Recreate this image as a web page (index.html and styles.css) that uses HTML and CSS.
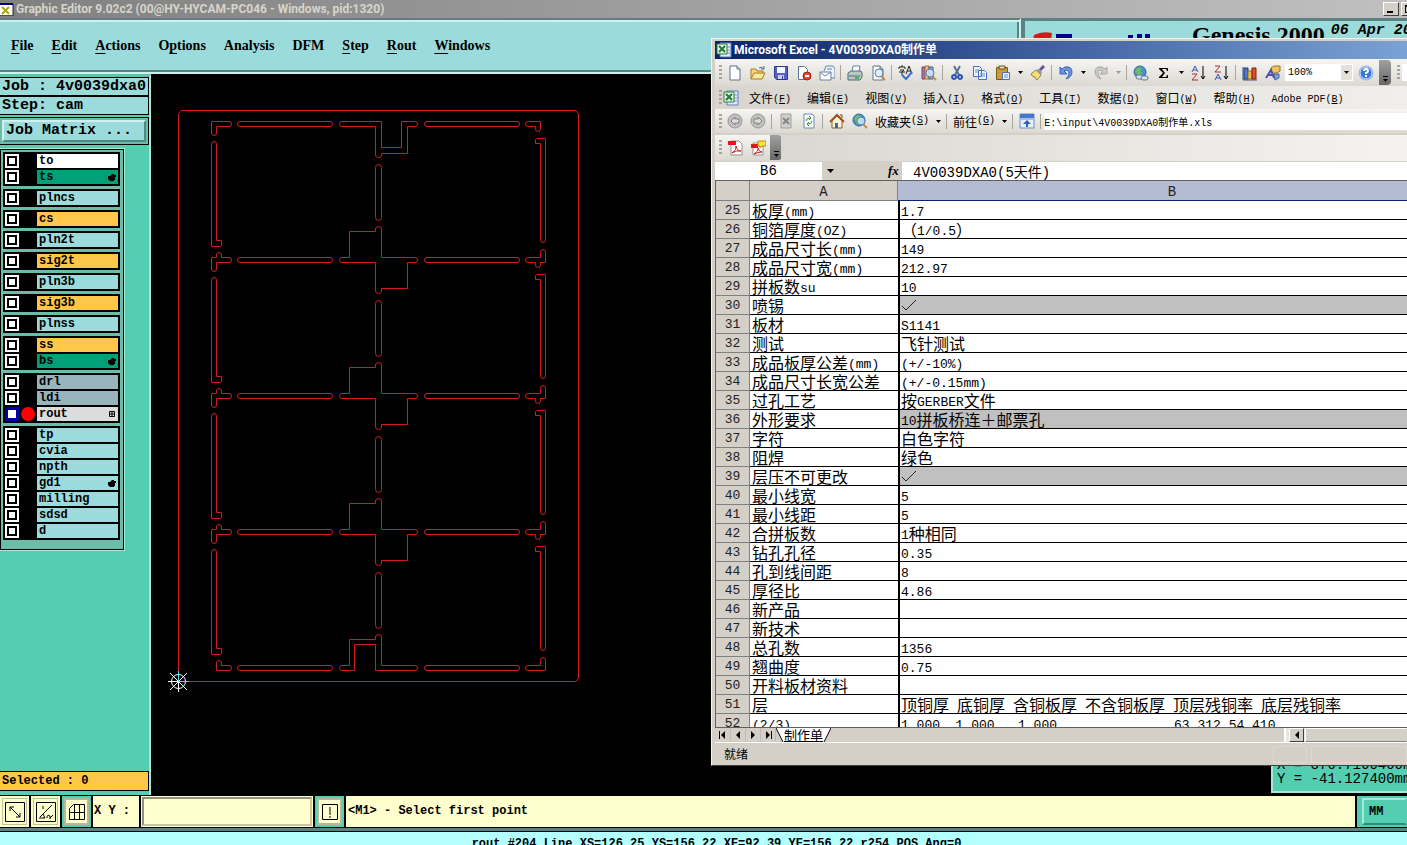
FILE: index.html
```html
<!DOCTYPE html>
<html lang="zh-CN">

<head>
    <meta charset="UTF-8">
    <meta name="viewport" content="width=device-width, initial-scale=1.0">
    <title>Graphic Editor</title>
    <link rel="stylesheet" href="styles.css">
</head>

<body>
    <!-- shared icon shapes -->
    <svg class="defs" width="0" height="0" aria-hidden="true">
        <defs>
            <symbol id="hand" viewBox="0 0 8 8">
                <path d="M0 3h2l2-2h2v1h2v2H7v3H6v1H2L0 6z" />
            </symbol>
            <symbol id="excel" viewBox="0 0 16 16">
                <path d="M4 1h11v14H4z" fill="#dfe9f7" stroke="#5a7ec0" />
                <path d="M10 5h4M10 8h4M10 11h4" stroke="#7d9bd0" />
                <path d="M1 2h10v10H1z" fill="#e8f4e4" stroke="#2c7a36" />
                <path d="M3 4l6 6M9 4l-6 6" stroke="#1f7a30" stroke-width="2" />
            </symbol>
            <symbol id="page" viewBox="0 0 16 16">
                <path d="M3 1h7l3 3v11H3z" fill="#fff" stroke="#5a7292" />
                <path d="M10 1v3h3" fill="#cfdcf0" stroke="#5a7292" />
            </symbol>
            <symbol id="lens" viewBox="0 0 16 16">
                <path d="M11 11l4 4" stroke="#c58a3c" stroke-width="2" />
                <circle cx="9" cy="8" r="4" fill="#d5ecfa" fill-opacity=".8" stroke="#5b7fa5" />
            </symbol>
            <symbol id="globe" viewBox="0 0 16 16">
                <circle cx="7" cy="7" r="6" fill="#4a90d0" stroke="#2b6aa0" />
                <path d="M3 4q3-3 6-1l-2 3 2 2-2 4q-3 0-3-4L2 7z" fill="#6cc060" />
            </symbol>
            <symbol id="arrow" viewBox="0 0 5 3">
                <path d="M0 0h5L2.500 3z" />
            </symbol>
        </defs>
    </svg>

    <!-- Graphic Editor window -->
    <div class="title-bar">
        <svg class="title-icon" viewBox="0 0 14 14">
            <path d="M0 1h13v12H0z" fill="#fff" />
            <path d="M0 1h13v2H0z" fill="#000080" />
            <path d="M2 5l7 7M9 5l-7 7" stroke="#a8a800" stroke-width="2" />
            <path d="M13 2v12H0" fill="none" stroke="#222" />
        </svg>
        <h1>Graphic Editor 9.02c2 (00@HY-HYCAM-PC046 - Windows, pid:1320)</h1>
        <button class="win-btn" aria-label="Minimize"><span class="min"></span></button>
        <button class="win-btn" aria-label="Maximize"><span class="max"></span></button>
    </div>

    <div class="header">
        <nav class="menu">
            <button><u>F</u>ile</button>
            <button><u>E</u>dit</button>
            <button><u>A</u>ctions</button>
            <button>O<u>p</u>tions</button>
            <button>Analysis</button>
            <button>DFM</button>
            <button><u>S</u>tep</button>
            <button><u>R</u>out</button>
            <button><u>W</u>indows</button>
        </nav>
        <div class="brand">
            <svg class="brand-logo" viewBox="0 0 120 24">
                <path d="M2 12q8-4 18-2l-2 14H0z" fill="#d81818" />
                <path d="M24 11h16v13H24zM96 12h5v12h-5zM105 11h5v13h-5zM113 11h5v13h-5z" fill="#000088" />
            </svg>
            <span class="brand-name">Genesis 2000</span>
            <span class="brand-date">06 Apr 20</span>
        </div>
    </div>

    <div class="main">
        <aside class="side">
            <div class="job-info">Job : 4v0039dxa0</div>
            <div class="job-info">Step: cam</div>
            <div class="matrix">
                <button class="matrix-btn">Job Matrix ...</button>
            </div>

            <div class="layers">
                <div class="group">
                    <label class="row"><input type="checkbox"><span class="dot"></span><span class="name white">to</span></label>
                    <label class="row"><input type="checkbox"><span class="dot"></span><span class="name green">ts<svg class="mark"><use href="#hand" /></svg></span></label>
                </div>
                <div class="group">
                    <label class="row"><input type="checkbox"><span class="dot"></span><span class="name">plncs</span></label>
                </div>
                <div class="group">
                    <label class="row"><input type="checkbox"><span class="dot"></span><span class="name orange">cs</span></label>
                </div>
                <div class="group">
                    <label class="row"><input type="checkbox"><span class="dot"></span><span class="name">pln2t</span></label>
                </div>
                <div class="group">
                    <label class="row"><input type="checkbox"><span class="dot"></span><span class="name orange">sig2t</span></label>
                </div>
                <div class="group">
                    <label class="row"><input type="checkbox"><span class="dot"></span><span class="name">pln3b</span></label>
                </div>
                <div class="group">
                    <label class="row"><input type="checkbox"><span class="dot"></span><span class="name orange">sig3b</span></label>
                </div>
                <div class="group">
                    <label class="row"><input type="checkbox"><span class="dot"></span><span class="name">plnss</span></label>
                </div>
                <div class="group">
                    <label class="row"><input type="checkbox"><span class="dot"></span><span class="name orange">ss</span></label>
                    <label class="row"><input type="checkbox"><span class="dot"></span><span class="name green">bs<svg class="mark"><use href="#hand" /></svg></span></label>
                </div>
                <div class="group">
                    <label class="row"><input type="checkbox"><span class="dot"></span><span class="name gray">drl</span></label>
                    <label class="row"><input type="checkbox"><span class="dot"></span><span class="name gray">ldi</span></label>
                    <label class="row"><input type="checkbox" checked><span class="dot red"></span><span class="name light">rout<svg class="mark" viewBox="0 0 8 8"><path d="M1.500 1.500h5v5h-5zM4 1v6M1 4h6" fill="none" stroke="#000" /></svg></span></label>
                </div>
                <div class="group">
                    <label class="row"><input type="checkbox"><span class="dot"></span><span class="name">tp</span></label>
                    <label class="row"><input type="checkbox"><span class="dot"></span><span class="name">cvia</span></label>
                    <label class="row"><input type="checkbox"><span class="dot"></span><span class="name">npth</span></label>
                    <label class="row"><input type="checkbox"><span class="dot"></span><span class="name">gd1<svg class="mark"><use href="#hand" /></svg></span></label>
                    <label class="row"><input type="checkbox"><span class="dot"></span><span class="name">milling</span></label>
                    <label class="row"><input type="checkbox"><span class="dot"></span><span class="name">sdsd</span></label>
                    <label class="row"><input type="checkbox"><span class="dot"></span><span class="name">d</span></label>
                </div>
            </div>

            <div class="selected">Selected : 0</div>
        </aside>

        <div class="canvas">
            <svg class="board" width="460" height="650" viewBox="151 74 460 650">
                <defs>
                    <!-- slots repeated on every board row -->
                    <g id="slots">
                        <rect x="237.500" y="121.500" width="95" height="5" rx="2.500" />
                        <rect x="424.500" y="121.500" width="95" height="5" rx="2.500" />
                    </g>
                    <g id="walls">
                        <rect x="375.500" y="164.500" width="6" height="56" rx="3" />
                        <path d="M211.500 246.500V144q0-2.500 2.500-2.500t2.500 2.500V240.500H221.500V245.500l-1 1z" />
                        <path d="M545.500 138.500V240q0 2.500-2.500 2.500t-2.500-2.500V143.500H535.500V139.500l1-1z" />
                    </g>
                    <g id="joints">
                        <path d="M211.500 257.500H216.500V255q0-2.500 2.500-2.500t2.500 2.500V257.500H229q2.500 0 2.500 2.500t-2.500 2.500H216.500V269q0 2.500-2.500 2.500t-2.500-2.500z" />
                        <path d="M342 257.500H349.500V231.500H375.500V229q0-2.500 3-2.500t3 2.500V257.500H415q2.500 0 2.500 2.500t-2.500 2.500H407.500V288.500H381.500V291q0 2.500-3 2.500t-3-2.500V262.500H342q-2.500 0-2.500-2.500t2.500-2.500z" />
                        <path d="M545.500 262.500V252q0-2.500-2.500-2.500t-2.500 2.500V257.500H528q-2.500 0-2.500 2.500t2.500 2.500H535.500V265q0 2.500 2.500 2.500t2.500-2.500V262.500z" />
                    </g>
                </defs>
                <g class="rout">
                    <path d="M178.500 681.500V113.500l3-3H575.500l3 3V678.500l-3 3z" />
                    <use href="#slots" />
                    <use href="#slots" y="136" />
                    <use href="#slots" y="272" />
                    <use href="#slots" y="408" />
                    <use href="#slots" y="544" />
                    <use href="#walls" />
                    <use href="#walls" y="136" />
                    <use href="#walls" y="272" />
                    <use href="#walls" y="408" />
                    <use href="#joints" />
                    <use href="#joints" y="136" />
                    <use href="#joints" y="272" />
                    <!-- top edge -->
                    <path d="M211.500 121.500H229q2.500 0 2.500 2.500t-2.500 2.500H216.500V133q0 2.500-2.500 2.500t-2.500-2.500z" />
                    <path d="M342 121.500H381.500V147.500H401.500V121.500H415q2.500 0 2.500 2.500t-2.500 2.500H407.500V153.500H381.500V155q0 2.500-3 2.500t-3-2.500V126.500H342q-2.500 0-2.500-2.500t2.500-2.500z" />
                    <path d="M540.500 121.500H528q-2.500 0-2.500 2.500t2.500 2.500H535.500V129q0 2.500 2.500 2.500t2.500-2.500z" />
                    <!-- bottom edge -->
                    <path d="M216.500 670.500V663q0-2.500 2.500-2.500t2.500 2.500V665.500H229q2.500 0 2.500 2.500t-2.500 2.500z" />
                    <path d="M342 665.500H349.500V639.500H375.500V637q0-2.500 3-2.500t3 2.500V665.500H415q2.500 0 2.500 2.500t-2.500 2.500H375.500V644.500H354.500V670.500H342q-2.500 0-2.500-2.500t2.500-2.500z" />
                    <path d="M545.500 670.500V660q0-2.500-2.500-2.500t-2.500 2.500V665.500H528q-2.500 0-2.500 2.500t2.500 2.500z" />
                </g>
                <g class="origin">
                    <circle cx="178.500" cy="681.500" r="7" />
                    <path d="M168 681.500h21M178.500 671v21M170 673l17 17M187 673l-17 17" />
                    <path class="axis" d="M178.500 671v10.500H189" />
                </g>
            </svg>
            <div class="coords">
                <div>X = 370.7160400mm</div>
                <div>Y = -41.127400mm</div>
            </div>
        </div>
    </div>

    <div class="command">
        <button class="cmd-btn" aria-label="Area select">
            <svg viewBox="0 0 20 20"><path d="M.500 .500h19v19H.500zM5 5l10 10M5 9V5h4M15 11v4h-4" /></svg>
        </button>
        <button class="cmd-btn" aria-label="Angle">
            <svg viewBox="0 0 20 20"><path d="M.500 .500h19v19H.500zM4 15L16 3M3 16h6l-2-4M7 4v3M11 16q0-4 3-2v3M17 13l-3 3" /></svg>
        </button>
        <button class="cmd-btn teal" aria-label="Grid">
            <svg viewBox="0 0 20 20"><path d="M2.500 6.500l4-4h11v15h-15zM2.500 10.500h15M7.500 3v14M12.500 3v14" /></svg>
        </button>
        <label class="xy" for="xy">X Y :</label>
        <div class="xy-box"><input type="text" id="xy"></div>
        <button class="cmd-btn teal" aria-label="Alert">
            <svg viewBox="0 0 20 20"><path d="M2.500 2.500h15v15h-15zM10 5v8M10 14v2" /></svg>
        </button>
        <div class="message">&lt;M1&gt; - Select first point</div>
        <div class="units"><button>MM</button></div>
    </div>
    <div class="status-line">rout #204 Line XS=126.25 YS=156.22 XE=92.39 YE=156.22 r254 POS Ang=0</div>

    <!-- Excel window -->
    <section class="excel">
        <div class="excel-title">
            <svg class="icon"><use href="#excel" /></svg>
            <h2>Microsoft Excel - 4V0039DXA0制作单</h2>
        </div>

        <div class="toolbar">
            <span class="grip"></span>
            <button aria-label="新建"><svg class="icon"><use href="#page" /></svg></button>
            <button aria-label="打开"><svg class="icon" viewBox="0 0 16 16"><path d="M1 14V4h5l1 2h6v3" fill="#f8d878" stroke="#a87820" /><path d="M1 14l3-6h11l-3 6z" fill="#ffe9a0" stroke="#a87820" /><path d="M9 3q3-2 5 1M14 1v3h-3" fill="none" stroke="#4070b0" /></svg></button>
            <button aria-label="保存"><svg class="icon" viewBox="0 0 16 16"><path d="M1.500 1.500h13v13h-11l-2-2z" fill="#5560c8" stroke="#303890" /><path d="M4 2h8v6H4z" fill="#f2f4ff" /><path d="M5 10h6v4H5z" fill="#c8cce8" /><path d="M9 11h1v3H9z" fill="#303890" /></svg></button>
            <button aria-label="权限"><svg class="icon" viewBox="0 0 16 16"><path d="M2.500 1.500h6l3 3v10h-9z" fill="#fff" stroke="#5a7292" /><circle cx="11" cy="11" r="4" fill="#e04830" stroke="#a02010" /><path d="M9 11h4" stroke="#fff" stroke-width="2" /></svg></button>
            <button aria-label="电子邮件"><svg class="icon" viewBox="0 0 16 16"><path d="M5 6l2-5h7l2 3v9H6" fill="#eef3fb" stroke="#6a82a8" /><path d="M1 7h11v8H1z" fill="#fff" stroke="#6a82a8" /><path d="M1 7l5 4 6-4M8 4h5" fill="none" stroke="#6a82a8" /></svg></button>
            <span class="sep"></span>
            <button aria-label="打印"><svg class="icon" viewBox="0 0 16 16"><path d="M5 7l1-6h7l-1 6" fill="#fff" stroke="#6a82a8" /><path d="M1 8l3-2h10l1 2v4l-2 3H1z" fill="#b8c8c8" stroke="#506878" /><path d="M2 11h11" stroke="#506878" /><path d="M8 13h4" stroke="#40c040" stroke-width="2" /></svg></button>
            <button aria-label="打印预览"><svg class="icon"><use href="#page" /><use href="#lens" /></svg></button>
            <span class="sep"></span>
            <button aria-label="拼写检查"><svg class="icon" viewBox="0 0 16 16"><path d="M4 0v2M1 4V2h6v2M2 5h4L4 7v3M1 7h6M8 9l3-8 3 8M9 6h4" fill="none" stroke="#222" /><path d="M4 10l4 4 6-7" fill="none" stroke="#3a70d0" stroke-width="2" /></svg></button>
            <button aria-label="信息检索"><svg class="icon" viewBox="0 0 16 16"><path d="M1 2h3v12H1z" fill="#b06cc0" stroke="#704080" /><path d="M4 1h4v13H4z" fill="#f0c070" stroke="#a07030" /><path d="M8 2h4v12H8z" fill="#90a8e0" stroke="#4060a0" /><use href="#lens" /></svg></button>
            <span class="sep"></span>
            <button aria-label="剪切"><svg class="icon" viewBox="0 0 16 16"><path d="M5 1l5 9M11 1l-5 9" stroke="#5a7090" stroke-width="2" /><path d="M5 10a2 2 0 1 0 .1 0zM11 10a2 2 0 1 0 .1 0z" fill="none" stroke="#2850b8" stroke-width="2" /></svg></button>
            <button aria-label="复制"><svg class="icon" viewBox="0 0 16 16"><path d="M1.500 1.500h6l2 2v8h-8zM6.500 5.500h6l2 2v7h-8z" fill="#edf3ff" stroke="#4a70c0" /><path d="M3 5h4M3 7h3M8 9h5M8 11h5" stroke="#6f91d0" /></svg></button>
            <button aria-label="粘贴"><svg class="icon" viewBox="0 0 16 16"><path d="M1.500 2.500h11v12h-11z" fill="#d09a38" stroke="#7a5818" /><path d="M4 1h6v3H4z" fill="#e8e0b0" stroke="#605020" /><path d="M7.500 7.500h7v7h-7z" fill="#edf3ff" stroke="#4a70c0" /><path d="M9 10h4M9 12h4" stroke="#6f91d0" /></svg></button>
            <button class="drop" aria-label="粘贴选项"><svg class="caret"><use href="#arrow" /></svg></button>
            <button aria-label="格式刷"><svg class="icon" viewBox="0 0 16 16"><path d="M1 9l5-4 5 5-4 5q-2-1-2-3-3 0-4-3z" fill="#f4dc80" stroke="#a08030" /><path d="M6 5l3-1 3 3-1 3z" fill="#9098b0" /><path d="M10 5l4-4" stroke="#705090" stroke-width="3" /></svg></button>
            <span class="sep"></span>
            <button aria-label="撤消"><svg class="icon" viewBox="0 0 16 16"><path d="M2 2v7h7L6 6q5-2 5 2 0 3-3 6 6-2 6-7 0-6-7-5L4 4z" fill="#6a94e4" stroke="#3c62b0" /></svg></button>
            <button class="drop" aria-label="撤消列表"><svg class="caret"><use href="#arrow" /></svg></button>
            <button aria-label="恢复" disabled><svg class="icon" viewBox="0 0 16 16"><path d="M14 2v7H7l3-3Q5 4 5 8q0 3 3 6-6-2-6-7 0-6 7-5l3 2z" fill="#cacaca" stroke="#a8a8a8" /></svg></button>
            <button class="drop off" aria-label="恢复列表" disabled><svg class="caret"><use href="#arrow" /></svg></button>
            <span class="sep"></span>
            <button aria-label="超链接"><svg class="icon" viewBox="0 0 16 16"><use href="#globe" /><rect x="3" y="10" width="7" height="4" rx="2" fill="#dde6ee" stroke="#5a7890" /><rect x="8" y="11" width="7" height="4" rx="2" fill="#dde6ee" stroke="#5a7890" /></svg></button>
            <button aria-label="自动求和"><svg class="icon" viewBox="0 0 16 16"><path d="M3 3h9v3h-1l-1-2H6l3 4-3 4h4l1-2h1v3H3v-1l4-4-4-4z" /></svg></button>
            <button class="drop" aria-label="函数列表"><svg class="caret"><use href="#arrow" /></svg></button>
            <button aria-label="升序排序"><svg class="icon" viewBox="0 0 16 16"><path d="M1 7l3-6 3 6M2 5h4" fill="none" stroke="#3858b0" /><path d="M1 9h5l-5 6h6" fill="none" stroke="#a83030" /><path d="M12 1v13M10 11l2 3 2-3" fill="none" stroke="#000" /></svg></button>
            <button aria-label="降序排序"><svg class="icon" viewBox="0 0 16 16"><path d="M1 1h5L1 7h6" fill="none" stroke="#a83030" /><path d="M1 15l3-6 3 6M2 13h4" fill="none" stroke="#3858b0" /><path d="M12 1v13M10 11l2 3 2-3" fill="none" stroke="#000" /></svg></button>
            <span class="sep"></span>
            <button aria-label="图表向导"><svg class="icon" viewBox="0 0 16 16"><path d="M1 2v13h14" fill="none" stroke="#405080" /><path d="M2 3h4v11H2z" fill="#5078d0" stroke="#203870" /><path d="M6 6h4v8H6z" fill="#f0c040" stroke="#907020" /><path d="M10 3h4v11h-4z" fill="#d85030" stroke="#802010" /></svg></button>
            <button aria-label="绘图"><svg class="icon" viewBox="0 0 16 16"><path d="M6 3l3-2h6v5l-3 2H6z" fill="#f0c060" stroke="#a07028" /><path d="M1 13L6 5l3 8M3 10h5" fill="none" stroke="#5050b0" stroke-width="2" /><path d="M9 9h5v4l-4 2z" fill="#80a0d8" stroke="#4060a0" /></svg></button>
            <select class="zoom" aria-label="显示比例">
                <option>100%</option>
            </select>
            <button class="help" aria-label="帮助"><svg class="icon" viewBox="0 0 16 16"><circle cx="8" cy="8" r="7" fill="#3c78d8" stroke="#98b8e8" /><circle cx="8" cy="8" r="6" fill="none" stroke="#d8e6fa" /><path d="M6 6q0-2 2-2t2 2q0 1-2 2v1M8 10v2" fill="none" stroke="#fff" stroke-width="2" /></svg></button>
            <button class="more" aria-label="工具栏选项"><svg viewBox="0 0 7 6"><path d="M1 0h5v1H1zM1 3h5L3.500 6z" /></svg></button>
            <span class="grip second"></span>
            <span class="field-edge"></span>
        </div>

        <div class="excel-menu">
            <span class="grip"></span>
            <svg class="icon"><use href="#excel" /></svg>
            <button>文件<span class="en">(<u>F</u>)</span></button>
            <button>编辑<span class="en">(<u>E</u>)</span></button>
            <button>视图<span class="en">(<u>V</u>)</span></button>
            <button>插入<span class="en">(<u>I</u>)</span></button>
            <button>格式<span class="en">(<u>O</u>)</span></button>
            <button>工具<span class="en">(<u>T</u>)</span></button>
            <button>数据<span class="en">(<u>D</u>)</span></button>
            <button>窗口<span class="en">(<u>W</u>)</span></button>
            <button>帮助<span class="en">(<u>H</u>)</span></button>
            <button><span class="en">Adobe PDF(<u>B</u>)</span></button>
        </div>

        <div class="toolbar web">
            <span class="grip"></span>
            <button aria-label="后退" disabled><svg class="icon" viewBox="0 0 16 16"><circle cx="8" cy="8" r="7" fill="#c0c0c0" stroke="#989898" /><path d="M8 4L4 8l4 4v-2h4V6H8z" fill="#dcdcdc" stroke="#808080" /></svg></button>
            <button aria-label="前进" disabled><svg class="icon" viewBox="0 0 16 16"><circle cx="8" cy="8" r="7" fill="#c0c0c0" stroke="#989898" /><path d="M8 4l4 4-4 4v-2H4V6h4z" fill="#dcdcdc" stroke="#808080" /></svg></button>
            <span class="sep"></span>
            <button aria-label="停止" disabled><svg class="icon" viewBox="0 0 16 16"><path d="M3 1h10v14H3z" fill="#d0d0d0" stroke="#a0a0a0" /><path d="M5 5l6 6M11 5l-6 6" stroke="#888" stroke-width="2" /></svg></button>
            <button aria-label="刷新"><svg class="icon" viewBox="0 0 16 16"><path d="M3 1h8l2 2v12H3z" fill="#fff" stroke="#6888b8" /><path d="M5 8q0-3 4-3M8 3l2 2-2 2M11 8q0 3-4 3M8 9l-2 2 2 2" fill="none" stroke="#389038" /></svg></button>
            <span class="sep"></span>
            <button aria-label="主页"><svg class="icon" viewBox="0 0 16 16"><path d="M3 8v7h10V8L8 3z" fill="#fff4d8" stroke="#806030" /><path d="M1 9l7-7 7 7" fill="none" stroke="#a05020" stroke-width="2" /><path d="M11 2h2v3" fill="none" stroke="#704020" /><path d="M6 10h3v5H6z" fill="#3868a8" /></svg></button>
            <button aria-label="搜索"><svg class="icon"><use href="#globe" /><use href="#lens" /></svg></button>
            <button class="text">收藏夹<span class="en">(<u>S</u>)</span><svg class="caret"><use href="#arrow" /></svg></button>
            <span class="sep"></span>
            <button class="text">前往<span class="en">(<u>G</u>)</span><svg class="caret"><use href="#arrow" /></svg></button>
            <span class="sep"></span>
            <button aria-label="只显示Web工具栏"><svg class="icon" viewBox="0 0 16 16"><path d="M1 1h14v14H1z" fill="#e6effc" stroke="#6890c8" /><path d="M1 1h14v4H1z" fill="#4878c8" /><path d="M2 6h12" stroke="#6890c8" /><path d="M8 7l4 4H9v3H7v-3H4z" fill="#3060b8" /></svg></button>
            <span class="sep"></span>
            <input class="address" type="text" aria-label="地址" value="E:\input\4V0039DXA0制作单.xls">
        </div>

        <div class="pdf-bar">
            <div class="toolbar pdf">
                <span class="grip"></span>
                <button aria-label="转换为 PDF"><svg class="icon" viewBox="0 0 16 16"><path d="M4 1h8l3 3v11H4z" fill="#fff" stroke="#909090" /><path d="M1 1h8v4H1z" fill="#e01818" /><path d="M5 13q5-3 4-7 1 5 5 5-5-1-9 2z" fill="none" stroke="#d02020" /></svg></button>
                <button aria-label="转换并注释"><svg class="icon" viewBox="0 0 16 16"><path d="M3 3h8l2 2v10H3z" fill="#fff" stroke="#909090" /><path d="M1 4h7v4H1z" fill="#e01818" /><path d="M4 14q5-3 4-6 1 4 4 4-4 0-8 2z" fill="none" stroke="#d02020" /><path d="M8 1h8v5h-4l-2 2V6H8z" fill="#ffe040" stroke="#b09010" /></svg></button>
                <button class="more" aria-label="工具栏选项"><svg viewBox="0 0 7 6"><path d="M1 0h5v1H1zM1 3h5L3.500 6z" /></svg></button>
            </div>
        </div>

        <div class="formula">
            <input class="cell-name" type="text" aria-label="名称框" value="B6">
            <button class="name-drop" aria-label="名称列表"><svg viewBox="0 0 7 4"><path d="M0 0h7L3.500 4z" /></svg></button>
            <span class="fx">fx</span>
            <input class="cell-value" type="text" aria-label="编辑栏" value="4V0039DXA0(5天件)">
        </div>

        <div class="sheet">
            <table>
                <thead>
                    <tr>
                        <th class="num"></th>
                        <th class="col-a">A</th>
                        <th class="col-b">B</th>
                    </tr>
                </thead>
                <tbody>
                    <tr><th>25</th><td>板厚<span class="en">(mm)</span></td><td><span class="en">1.7</span></td></tr>
                    <tr><th>26</th><td>铜箔厚度<span class="en">(OZ)</span></td><td>（<span class="en">1/0.5</span>）</td></tr>
                    <tr><th>27</th><td>成品尺寸长<span class="en">(mm)</span></td><td><span class="en">149</span></td></tr>
                    <tr><th>28</th><td>成品尺寸宽<span class="en">(mm)</span></td><td><span class="en">212.97</span></td></tr>
                    <tr><th>29</th><td>拼板数<span class="en">su</span></td><td><span class="en">10</span></td></tr>
                    <tr><th>30</th><td>喷锡</td><td class="filled"><svg class="tick" viewBox="0 0 16 12"><path d="M1 7l4 4L15 1" /></svg></td></tr>
                    <tr><th>31</th><td>板材</td><td><span class="en">S1141</span></td></tr>
                    <tr><th>32</th><td>测试</td><td>飞针测试</td></tr>
                    <tr><th>33</th><td>成品板厚公差<span class="en">(mm)</span></td><td><span class="en">(+/-10%)</span></td></tr>
                    <tr><th>34</th><td>成品尺寸长宽公差</td><td><span class="en">(+/-0.15mm)</span></td></tr>
                    <tr><th>35</th><td>过孔工艺</td><td>按<span class="en">GERBER</span>文件</td></tr>
                    <tr><th>36</th><td>外形要求</td><td class="filled"><span class="en">10</span>拼板桥连＋邮票孔</td></tr>
                    <tr><th>37</th><td>字符</td><td>白色字符</td></tr>
                    <tr><th>38</th><td>阻焊</td><td>绿色</td></tr>
                    <tr><th>39</th><td>层压不可更改</td><td class="filled"><svg class="tick" viewBox="0 0 16 12"><path d="M1 7l4 4L15 1" /></svg></td></tr>
                    <tr><th>40</th><td>最小线宽</td><td><span class="en">5</span></td></tr>
                    <tr><th>41</th><td>最小线距</td><td><span class="en">5</span></td></tr>
                    <tr><th>42</th><td>合拼板数</td><td><span class="en">1</span>种相同</td></tr>
                    <tr><th>43</th><td>钻孔孔径</td><td><span class="en">0.35</span></td></tr>
                    <tr><th>44</th><td>孔到线间距</td><td><span class="en">8</span></td></tr>
                    <tr><th>45</th><td>厚径比</td><td><span class="en">4.86</span></td></tr>
                    <tr><th>46</th><td>新产品</td><td></td></tr>
                    <tr><th>47</th><td>新技术</td><td></td></tr>
                    <tr><th>48</th><td>总孔数</td><td><span class="en">1356</span></td></tr>
                    <tr><th>49</th><td>翘曲度</td><td><span class="en">0.75</span></td></tr>
                    <tr><th>50</th><td>开料板材资料</td><td></td></tr>
                    <tr><th>51</th><td>层</td><td>顶铜厚&ensp;底铜厚&ensp;含铜板厚&ensp;不含铜板厚&ensp;顶层残铜率&ensp;底层残铜率</td></tr>
                    <tr><th>52</th><td><span class="en">(2/3)</span></td><td><span class="en">1.000  1.000   1.000               63.312,54.410</span></td></tr>
                </tbody>
            </table>
        </div>

        <div class="tabs">
            <button class="nav" aria-label="第一张"><svg viewBox="0 0 8 8"><path d="M0 0h1v8H0zM6 0v8L2 4z" /></svg></button>
            <button class="nav" aria-label="上一张"><svg viewBox="0 0 8 8"><path d="M6 0v8L2 4z" /></svg></button>
            <button class="nav" aria-label="下一张"><svg viewBox="0 0 8 8"><path d="M2 0v8l4-4z" /></svg></button>
            <button class="nav" aria-label="最后一张"><svg viewBox="0 0 8 8"><path d="M2 0v8l4-4zM7 0h1v8H7z" /></svg></button>
            <svg class="tab-edge" viewBox="0 0 8 14"><path class="fill" d="M0 0l7 14h1V0z" /><path d="M0 0l7 14" /></svg>
            <button class="tab">制作单</button>
            <svg class="tab-edge" viewBox="0 0 8 14"><path class="fill" d="M8 0L1 14H0V0z" /><path d="M8 0L1 14" /></svg>
            <div class="scroll">
                <button class="scroll-btn" aria-label="向左滚动"><svg viewBox="0 0 8 8"><path d="M6 0v8L2 4z" /></svg></button>
                <div class="thumb"></div>
            </div>
        </div>

        <div class="excel-status">
            <span>就绪</span>
            <span class="pane small"></span>
            <span class="pane"></span>
        </div>
    </section>
</body>

</html>
```
FILE: styles.css
```css
* {
    margin: 0;
    padding: 0;
    box-sizing: border-box;
}

body {
    display: flex;
    flex-direction: column;
    position: relative;
    height: 100vh;
    overflow: hidden;
    background: #000;
    color: #000;
    font-family: "Liberation Mono", "Noto Sans CJK SC", monospace;
    font-size: 12px;
    font-weight: bold;
}

button {
    border: none;
    background: none;
    color: inherit;
    font: inherit;
    white-space: nowrap;
}

input,
select {
    border: none;
    border-radius: 0;
    color: #000;
    font-family: inherit;
}

.defs {
    position: absolute;
}

/* Title bar */
.title-bar {
    display: flex;
    align-items: center;
    gap: 2px;
    height: 18px;
    flex: none;
    background: linear-gradient(to right, #808080, #c0c0c0);
    overflow: hidden;
}

.title-icon {
    width: 14px;
    height: 14px;
}

.title-bar h1 {
    flex: 1;
    color: #d8d4cc;
    font-family: Roboto, sans-serif;
    font-size: 12px;
    line-height: 16px;
    white-space: nowrap;
}

.win-btn {
    display: flex;
    align-items: flex-end;
    width: 16px;
    height: 14px;
    padding: 2px 3px;
    background: #d4d0c8;
    border: 1px solid;
    border-color: #fff #404040 #404040 #fff;
}

.win-btn:last-child {
    margin-right: -10px;
}

.min {
    width: 6px;
    height: 2px;
    background: #000;
}

.max {
    width: 9px;
    height: 8px;
    border: 1px solid #000;
    border-top-width: 2px;
}

/* Menu and logo */
.header {
    display: flex;
    flex: none;
    height: 56px;
    gap: 2px;
    background: #5a8282;
    overflow: hidden;
}

.menu {
    display: flex;
    align-items: center;
    flex: 1;
    gap: 18px;
    padding: 0 11px;
    background: #9cdbdb;
    border-top: 2px solid #5a8282;
    border-right: 2px solid #d0f0f0;
    border-bottom: 2px solid #d0f0f0;
    box-shadow: inset 0 2px #d0f0f0, inset -2px -2px #5a8282;
}

.menu button {
    font-family: "Liberation Serif", serif;
    font-size: 14px;
}

.menu u {
    text-underline-offset: 3px;
}

.brand {
    display: flex;
    align-items: flex-start;
    flex: 0 0 384px;
    gap: 6px;
    padding: 2px 0 0 7px;
    background: #9cdbdb;
    border-top: 3px solid #5a8282;
    border-left: 2px solid #5a8282;
    white-space: nowrap;
    overflow: hidden;
}

.brand-logo {
    width: 120px;
    height: 24px;
    flex: none;
    margin-right: 34px;
}

.brand-name {
    font-family: "Liberation Serif", serif;
    font-size: 24px;
    line-height: 24px;
}

.brand-date {
    font-size: 15px;
    font-style: italic;
    line-height: 16px;
}

/* Main area */
.main {
    display: flex;
    flex: 1;
    min-height: 0;
}

.side {
    display: flex;
    flex-direction: column;
    align-items: flex-start;
    width: 151px;
    background: #54ceb0;
    border-top: 3px solid #6cbcaa;
    border-right: 2px solid #a8e8d8;
}

.job-info {
    width: 149px;
    height: 19px;
    padding-left: 2px;
    background: #9cdbdb;
    border: 1px solid #000;
    border-left: none;
    font-size: 15px;
    line-height: 18px;
    white-space: nowrap;
}

.matrix {
    width: 149px;
    margin: 2px 0 4px;
    padding: 2px;
    background: #6cbcaa;
    border: 1px solid #000;
    border-left: none;
}

.matrix-btn {
    width: 144px;
    height: 22px;
    padding-left: 2px;
    background: #9cdbdb;
    border: 2px solid;
    border-color: #d0f0f0 #4c8c88 #4c8c88 #d0f0f0;
    font-size: 15px;
    line-height: 18px;
    text-align: left;
}

.layers {
    display: flex;
    flex-direction: column;
    gap: 3px;
    width: 124px;
    padding: 2px 2px 9px;
    background: #6cbcaa;
    border: 1px solid #000;
    outline: 1px solid #a8e8d8;
}

.group {
    display: flex;
    flex-direction: column;
    gap: 2px;
    width: 117px;
    padding: 2px;
    background: #000;
}

.row {
    display: flex;
    height: 14px;
}

.row input {
    appearance: none;
    width: 14px;
    height: 14px;
    background: #fff;
    border: 2px solid #fff;
    box-shadow: inset 0 0 0 2px #000;
}

.row input:checked {
    border-color: #0000a0;
    box-shadow: inset 0 0 0 1px #0000a0;
}

.dot {
    width: 14px;
    height: 14px;
    margin: 0 2px;
    border-radius: 50%;
}

.dot.red {
    background: #f00;
}

.name {
    display: flex;
    align-items: center;
    justify-content: space-between;
    flex: 1;
    padding: 0 2px;
    background: #9cdbdb;
    line-height: 14px;
}

.name.white {
    background: #fff;
}

.name.green {
    background: #00a078;
}

.name.orange {
    background: #ffc74a;
}

.name.gray {
    background: #98b4bc;
}

.name.light {
    background: #dcdcdc;
}

.mark {
    width: 8px;
    height: 8px;
}

.selected {
    width: 149px;
    height: 20px;
    margin: auto 0 4px;
    padding-left: 2px;
    background: #ffc74a;
    border: 1px solid #000;
    border-left: none;
    line-height: 18px;
}

/* Drawing */
.canvas {
    position: relative;
    flex: 1;
    min-width: 0;
    overflow: hidden;
}

.board {
    display: block;
}

.rout {
    fill: none;
    stroke: #d01c1c;
}

.origin {
    fill: none;
    stroke: #fff;
}

.axis {
    stroke: #50e0e8;
}

.coords {
    position: absolute;
    right: 0;
    bottom: 2px;
    width: 136px;
    padding: 2px 0 5px 4px;
    background: #54ceb0;
    border-left: 2px solid #a8e8d8;
    border-bottom: 2px solid #a8e8d8;
    font-size: 14px;
    font-weight: normal;
    line-height: 14px;
    white-space: nowrap;
    overflow: hidden;
}

/* Command line */
.command {
    display: flex;
    flex: none;
    gap: 2px;
    height: 33px;
    padding: 1px 0;
    background: #000;
}

.cmd-btn {
    display: flex;
    align-items: center;
    justify-content: center;
    width: 29px;
    background: #ffffce;
    border: 2px solid #ffffce;
    outline: 1px solid #c0c098;
    outline-offset: -3px;
}

.cmd-btn svg {
    width: 20px;
    height: 20px;
    flex: none;
    fill: none;
    stroke: #000;
}

.cmd-btn.teal {
    border-color: #54ceb0;
    outline: 2px solid #b8b898;
    outline-offset: -4px;
}

.xy {
    width: 46px;
    padding-left: 1px;
    background: #ffffce;
    line-height: 31px;
}

.xy-box {
    display: flex;
    width: 172px;
    padding: 1px;
    background: #ffffce;
}

.xy-box input {
    width: 100%;
    background: #ffffce;
    border: 2px solid;
    border-color: #90907c #c8c8a0 #c8c8a0 #90907c;
}

.message {
    flex: 1;
    padding-left: 2px;
    background: #ffffce;
    line-height: 31px;
}

.units {
    display: flex;
    width: 50px;
    padding: 2px 0 2px 5px;
    background: #54ceb0;
}

.units button {
    width: 100%;
    padding-left: 5px;
    border: 2px solid;
    border-color: #a8e8d8 #54ceb0 #388878 #a8e8d8;
    text-align: left;
}

.status-line {
    flex: none;
    height: 17px;
    padding: 5px 0 0 26px;
    background: #b4ffff;
    border-top: 3px solid #5a8282;
    box-shadow: inset 0 1px #000;
    line-height: 16px;
    text-align: center;
    overflow: hidden;
}

/* Excel window */
.excel {
    position: absolute;
    top: 38px;
    right: 0;
    bottom: 79px;
    left: 711px;
    display: flex;
    flex-direction: column;
    padding: 2px 0 2px 3px;
    background: #d4d0c8;
    border: 1px solid #f4f2ee;
    border-right: none;
    border-bottom-color: #404040;
    font-family: "Noto Sans CJK SC", sans-serif;
    font-weight: normal;
    overflow: hidden;
}

.excel-title {
    display: flex;
    align-items: center;
    gap: 2px;
    flex: none;
    height: 18px;
    padding-left: 1px;
    background: linear-gradient(to right, #0a246a, #7ba2d4);
    color: #fff;
}

.excel-title h2 {
    font-family: Roboto, "Noto Sans CJK SC", sans-serif;
    font-size: 12px;
    line-height: 18px;
    white-space: nowrap;
}

.icon {
    display: block;
    width: 16px;
    height: 16px;
    flex: none;
}

/* Latin text set next to Chinese, must not stretch the line */
.en {
    font-family: "Liberation Mono", monospace;
    font-size: 10px;
    line-height: 10px;
    vertical-align: 1px;
}

.toolbar {
    display: flex;
    align-items: center;
    gap: 1px;
    flex: none;
    height: 27px;
    background: linear-gradient(#f6f5f2, #dcd9d2);
    overflow: hidden;
}

.toolbar button {
    display: flex;
    align-items: center;
    justify-content: center;
    flex: none;
    width: 22px;
    height: 22px;
}

.toolbar .drop {
    width: 11px;
}

.toolbar .text {
    width: auto;
    padding: 0 3px;
}

.text .caret {
    margin-left: 7px;
}

.toolbar .help {
    width: 24px;
}

.toolbar .more {
    align-items: flex-end;
    width: 12px;
    height: 25px;
    padding-bottom: 3px;
    background: linear-gradient(#a0a0a0, #686868);
    border-radius: 0 4px 4px 0;
}

.more svg {
    width: 7px;
    height: 6px;
}

.caret {
    width: 5px;
    height: 3px;
}

.off {
    fill: #999;
}

.grip {
    flex: none;
    width: 3px;
    height: 15px;
    margin: 0 1px 0 4px;
    background: repeating-linear-gradient(#a8a49c 0 2px, transparent 2px 4px);
}

.sep {
    flex: none;
    width: 1px;
    height: 15px;
    margin: 0 2px 0 1px;
    background: #a8a49c;
}

.zoom {
    appearance: none;
    flex: none;
    width: 68px;
    height: 17px;
    padding-left: 3px;
    background: #fff url("data:image/svg+xml,%3Csvg xmlns='http://www.w3.org/2000/svg' width='11' height='15'%3E%3Cpath fill='%23e4e1da' d='M0 0h11v15H0z'/%3E%3Cpath d='M3 6h5L5.500 9z'/%3E%3C/svg%3E") no-repeat right 1px center;
    font-family: "Liberation Mono", monospace;
    font-size: 10px;
}

.grip.second {
    margin-left: 5px;
}

.field-edge {
    flex: 1;
    height: 17px;
    background: #fff;
}

.excel-menu {
    display: flex;
    align-items: center;
    flex: none;
    gap: 16px;
    height: 23px;
    background: linear-gradient(to right, #d8d5ce, #f0efec);
    font-size: 12px;
    line-height: 20px;
}

.excel-menu .grip {
    margin-right: -15px;
}

.excel-menu .icon {
    margin-right: -6px;
}

.toolbar.web {
    height: 24px;
}

.address {
    flex: 1;
    min-width: 0;
    height: 17px;
    background: #fff;
    font-family: "Liberation Mono", "Noto Sans CJK SC", monospace;
    font-size: 10px;
}

.pdf-bar {
    flex: none;
    height: 28px;
    background: linear-gradient(to right, #d8d5ce, #f4f3f0);
    border-top: 2px solid #d4d0c8;
}

.toolbar.pdf {
    width: 66px;
    height: 25px;
}

.formula {
    display: flex;
    align-items: center;
    flex: none;
    height: 19px;
}

.formula input {
    height: 18px;
    background: #fff;
    font-family: "Liberation Mono", "Noto Sans CJK SC", monospace;
    font-size: 14px;
}

.cell-name {
    width: 107px;
    text-align: center;
}

.name-drop {
    display: flex;
    align-items: center;
    width: 66px;
    height: 18px;
    padding-left: 5px;
}

.name-drop svg {
    width: 7px;
    height: 4px;
}

.fx {
    width: 14px;
    font-family: "Liberation Serif", serif;
    font-size: 13px;
    font-style: italic;
    font-weight: bold;
    line-height: 18px;
}

.cell-value {
    flex: 1;
    min-width: 0;
    padding-left: 11px;
}

/* Cells */
.sheet {
    flex: 1;
    min-height: 0;
    border-top: 1px solid #606060;
    border-left: 1px solid #606060;
    background: #fff;
    overflow: hidden;
}

.sheet table {
    width: 100%;
    border-spacing: 0;
    table-layout: fixed;
}

.sheet tr {
    height: 19px;
}

.sheet th {
    padding-top: 2px;
    background: #d4d0c8;
    border-right: 1px solid #808080;
    border-bottom: 1px solid #808080;
    font-family: "Liberation Mono", monospace;
    font-size: 13px;
    font-weight: normal;
    line-height: 16px;
    color: #222;
}

.sheet thead th {
    height: 20px;
    font-size: 14px;
}

.sheet .num {
    width: 34px;
}

.sheet .col-a {
    width: 148px;
}

.sheet .col-b {
    padding-left: 39px;
    background: #b4bcd4;
    border-right: none;
    border-bottom-color: #0a246a;
}

.sheet td {
    height: 19px;
    padding-left: 2px;
    background: #fff;
    border-bottom: 1px solid #000;
    font-size: 16px;
    line-height: 18px;
    white-space: pre;
    overflow: hidden;
}

.sheet td:last-child {
    border-left: 2px solid #000;
    padding-left: 1px;
}

.sheet td.filled {
    background: #c0c0c0;
}

.sheet .en {
    font-size: 13px;
    line-height: 12px;
}

.tick {
    display: block;
    width: 16px;
    height: 12px;
    fill: none;
    stroke: #222;
}

/* Sheet tabs */
.tabs {
    display: flex;
    flex: none;
    height: 16px;
    padding-left: 1px;
    border-top: 1px solid #606060;
    border-bottom: 1px solid #fff;
}

.nav {
    display: flex;
    align-items: center;
    justify-content: center;
    width: 15px;
    border-right: 1px solid #c0bcb4;
}

.nav svg,
.scroll-btn svg {
    width: 8px;
    height: 8px;
}

.tab-edge {
    width: 8px;
    height: 14px;
    stroke: #000;
}

.tab-edge .fill {
    fill: #fff;
    stroke: none;
}

.tab {
    background: #fff;
    font-size: 13px;
    line-height: 14px;
    text-decoration: underline;
}

.scroll {
    display: flex;
    width: 123px;
    margin-left: auto;
    padding-left: 3px;
    border-left: 2px solid #fff;
    background: #e8e6e0;
}

.scroll-btn {
    display: flex;
    align-items: center;
    justify-content: center;
    width: 15px;
    background: #d4d0c8;
    border: 1px solid;
    border-color: #fff #404040 #404040 #fff;
}

.thumb {
    flex: 1;
    margin-left: 1px;
    background: #d4d0c8;
    border: 1px solid;
    border-color: #fff #d4d0c8 #808080 #fff;
}

.excel-status {
    display: flex;
    align-items: center;
    flex: none;
    gap: 4px;
    height: 20px;
    padding: 2px 0 0 9px;
    font-size: 12px;
    line-height: 18px;
}

.pane {
    width: 96px;
    height: 17px;
    border: 1px solid #e0d8cc;
}

.pane.small {
    width: 34px;
    margin-left: auto;
}
```
